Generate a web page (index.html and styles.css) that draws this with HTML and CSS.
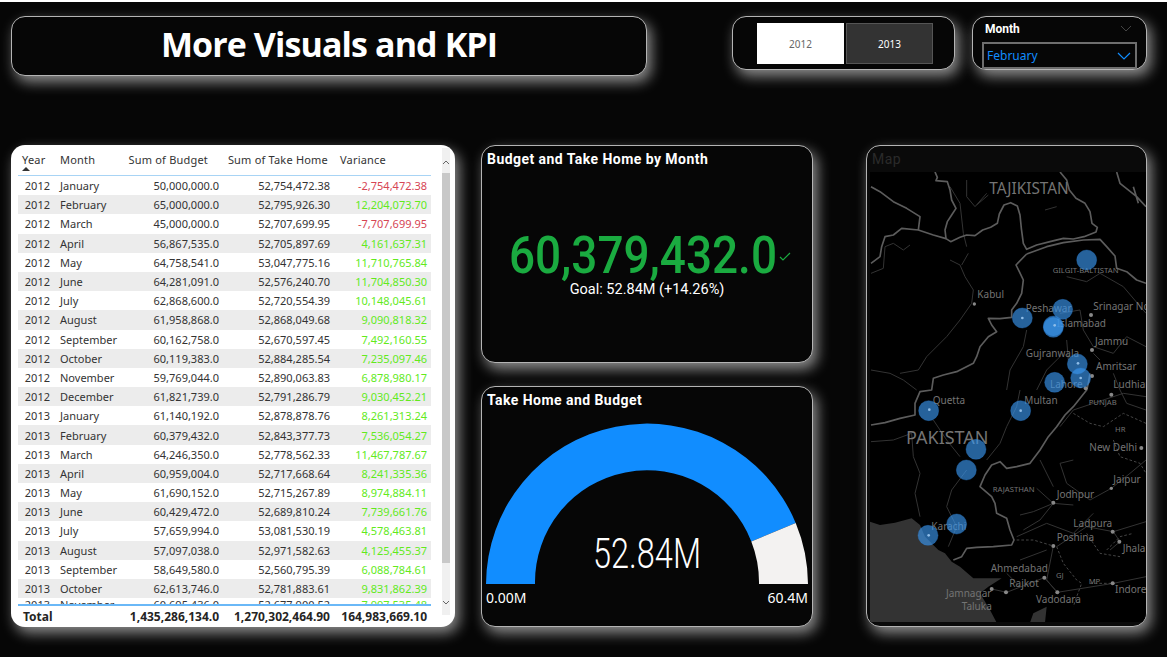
FILE: index.html
```html
<!DOCTYPE html>
<html lang="en">
<head>
<meta charset="UTF-8">
<meta name="viewport" content="width=device-width, initial-scale=1.0">
<title>More Visuals and KPI</title>
<link rel="stylesheet" href="styles.css">
</head>
<body>
<div class="page">
  <header class="top-row">
    <div class="card title-card"><h1>More Visuals and KPI</h1></div>
    <div class="card year-card">
      <div class="year-btn year-on">2012</div>
      <div class="year-btn year-off">2013</div>
    </div>
    <div class="card month-card">
      <div class="month-head">
        <span>Month</span>
        <svg class="chev" width="12" height="7" viewBox="0 0 12 7"><path d="M1 1l5 5 5-5" fill="none" stroke="#444" stroke-width="1"/></svg>
      </div>
      <div class="month-select">
        <span>February</span>
        <svg class="chev" width="14" height="8" viewBox="0 0 14 8"><path d="M1 1l6 6 6-6" fill="none" stroke="#118dff" stroke-width="1.2"/></svg>
      </div>
    </div>
  </header>

  <main class="dash">
    <section class="table-card">
      <div class="table-main">
        <div class="table-head">
          <div class="th-year">Year<i class="sort"></i></div>
          <div class="th-month">Month</div>
          <div class="num head-budget">Sum of Budget</div>
          <div class="num head-take">Sum of Take Home</div>
          <div class="th-var">Variance</div>
        </div>
        <div class="table-body">
          <div class="row"><span class="c-y">2012</span><span class="c-m">January</span><span class="num c-budget">50,000,000.0</span><span class="num c-take">52,754,472.38</span><span class="num c-var neg">-2,754,472.38</span></div>
          <div class="row"><span class="c-y">2012</span><span class="c-m">February</span><span class="num c-budget">65,000,000.0</span><span class="num c-take">52,795,926.30</span><span class="num c-var pos">12,204,073.70</span></div>
          <div class="row"><span class="c-y">2012</span><span class="c-m">March</span><span class="num c-budget">45,000,000.0</span><span class="num c-take">52,707,699.95</span><span class="num c-var neg">-7,707,699.95</span></div>
          <div class="row"><span class="c-y">2012</span><span class="c-m">April</span><span class="num c-budget">56,867,535.0</span><span class="num c-take">52,705,897.69</span><span class="num c-var pos">4,161,637.31</span></div>
          <div class="row"><span class="c-y">2012</span><span class="c-m">May</span><span class="num c-budget">64,758,541.0</span><span class="num c-take">53,047,775.16</span><span class="num c-var pos">11,710,765.84</span></div>
          <div class="row"><span class="c-y">2012</span><span class="c-m">June</span><span class="num c-budget">64,281,091.0</span><span class="num c-take">52,576,240.70</span><span class="num c-var pos">11,704,850.30</span></div>
          <div class="row"><span class="c-y">2012</span><span class="c-m">July</span><span class="num c-budget">62,868,600.0</span><span class="num c-take">52,720,554.39</span><span class="num c-var pos">10,148,045.61</span></div>
          <div class="row"><span class="c-y">2012</span><span class="c-m">August</span><span class="num c-budget">61,958,868.0</span><span class="num c-take">52,868,049.68</span><span class="num c-var pos">9,090,818.32</span></div>
          <div class="row"><span class="c-y">2012</span><span class="c-m">September</span><span class="num c-budget">60,162,758.0</span><span class="num c-take">52,670,597.45</span><span class="num c-var pos">7,492,160.55</span></div>
          <div class="row"><span class="c-y">2012</span><span class="c-m">October</span><span class="num c-budget">60,119,383.0</span><span class="num c-take">52,884,285.54</span><span class="num c-var pos">7,235,097.46</span></div>
          <div class="row"><span class="c-y">2012</span><span class="c-m">November</span><span class="num c-budget">59,769,044.0</span><span class="num c-take">52,890,063.83</span><span class="num c-var pos">6,878,980.17</span></div>
          <div class="row"><span class="c-y">2012</span><span class="c-m">December</span><span class="num c-budget">61,821,739.0</span><span class="num c-take">52,791,286.79</span><span class="num c-var pos">9,030,452.21</span></div>
          <div class="row"><span class="c-y">2013</span><span class="c-m">January</span><span class="num c-budget">61,140,192.0</span><span class="num c-take">52,878,878.76</span><span class="num c-var pos">8,261,313.24</span></div>
          <div class="row"><span class="c-y">2013</span><span class="c-m">February</span><span class="num c-budget">60,379,432.0</span><span class="num c-take">52,843,377.73</span><span class="num c-var pos">7,536,054.27</span></div>
          <div class="row"><span class="c-y">2013</span><span class="c-m">March</span><span class="num c-budget">64,246,350.0</span><span class="num c-take">52,778,562.33</span><span class="num c-var pos">11,467,787.67</span></div>
          <div class="row"><span class="c-y">2013</span><span class="c-m">April</span><span class="num c-budget">60,959,004.0</span><span class="num c-take">52,717,668.64</span><span class="num c-var pos">8,241,335.36</span></div>
          <div class="row"><span class="c-y">2013</span><span class="c-m">May</span><span class="num c-budget">61,690,152.0</span><span class="num c-take">52,715,267.89</span><span class="num c-var pos">8,974,884.11</span></div>
          <div class="row"><span class="c-y">2013</span><span class="c-m">June</span><span class="num c-budget">60,429,472.0</span><span class="num c-take">52,689,810.24</span><span class="num c-var pos">7,739,661.76</span></div>
          <div class="row"><span class="c-y">2013</span><span class="c-m">July</span><span class="num c-budget">57,659,994.0</span><span class="num c-take">53,081,530.19</span><span class="num c-var pos">4,578,463.81</span></div>
          <div class="row"><span class="c-y">2013</span><span class="c-m">August</span><span class="num c-budget">57,097,038.0</span><span class="num c-take">52,971,582.63</span><span class="num c-var pos">4,125,455.37</span></div>
          <div class="row"><span class="c-y">2013</span><span class="c-m">September</span><span class="num c-budget">58,649,580.0</span><span class="num c-take">52,560,795.39</span><span class="num c-var pos">6,088,784.61</span></div>
          <div class="row"><span class="c-y">2013</span><span class="c-m">October</span><span class="num c-budget">62,613,746.0</span><span class="num c-take">52,781,883.61</span><span class="num c-var pos">9,831,862.39</span></div>
          <div class="row row-cut"><span class="c-y">2013</span><span class="c-m">November</span><span class="num c-budget">60,695,436.0</span><span class="num c-take">52,677,900.52</span><span class="num c-var pos">7,997,535.48</span></div>
        </div>
        <div class="table-total">
          <span class="c-total">Total</span>
          <span class="num c-budget">1,435,286,134.0</span>
          <span class="num c-take">1,270,302,464.90</span>
          <span class="num c-var">164,983,669.10</span>
        </div>
      </div>
      <div class="scrollbar">
        <svg class="scroll-arrow" width="8" height="5" viewBox="0 0 8 5"><path d="M1 4l3-3 3 3" fill="none" stroke="#666"/></svg>
        <div class="scroll-thumb"></div>
        <div class="scroll-space"></div>
        <svg class="scroll-arrow" width="8" height="5" viewBox="0 0 8 5"><path d="M1 1l3 3 3-3" fill="none" stroke="#666"/></svg>
      </div>
    </section>

    <div class="mid-col">
      <section class="card kpi-card">
        <h2>Budget and Take Home by Month</h2>
        <div class="kpi-body">
          <div class="kpi-line">
            <span class="kpi-value">60,379,432.0</span>
            <svg class="kpi-check" width="12" height="9" viewBox="0 0 12 9"><path d="M1 5l3 3 7-7" fill="none" stroke="#1aab40" stroke-width="1.2"/></svg>
          </div>
          <div class="kpi-goal">Goal: 52.84M (+14.26%)</div>
        </div>
      </section>

      <section class="card gauge-card">
        <h2>Take Home and Budget</h2>
        <svg class="gauge" width="330" height="210" viewBox="486 417 330 210">
          <path d="M486 584A161 161 0 0 1 795.700 522.900L751.300 541.500A112 112 0 0 0 535 584Z" fill="#118dff"/>
          <path d="M795.700 522.900A161 161 0 0 1 808 584H759A112 112 0 0 0 751.300 541.500Z" fill="#f3f2f1"/>
          <text class="gauge-value" x="647" y="568" text-anchor="middle" textLength="108" lengthAdjust="spacingAndGlyphs">52.84M</text>
          <text class="gauge-label" x="486" y="603">0.00M</text>
          <text class="gauge-label" x="808" y="603" text-anchor="end">60.4M</text>
        </svg>
      </section>
    </div>

    <section class="card map-card">
      <h2>Map</h2>
      <svg class="map" width="276" height="450" viewBox="30 96 828 1350">
        <rect x="30" y="96" width="828" height="1350" fill="#000"/>
        <!-- sea -->
        <path class="sea" d="M30 1145L60 1155 105 1148 155 1135 180 1155 195 1190 235 1230 255 1240 275 1265 300 1280 340 1315 400 1315 425 1315 385 1340 360 1360 390 1410 410 1448 510 1448 520 1420 560 1400 555 1448H30Z"/>
        <!-- minor roads and rivers -->
        <g class="thin">
          <path d="M320 120L320 170 345 200 380 160M270 140L300 190 310 280 320 320M350 195L385 165M555 210L590 200"/>
          <path d="M270 360L300 375 315 410 340 450 335 490 300 540 260 590 200 650 175 690 120 700M325 340L305 375"/>
          <path d="M33 400L70 385 75 320 100 310 130 330 150 315M33 690L90 700 130 720 170 750"/>
          <path d="M620 410L680 425 720 400 790 440 858 520M600 520L660 510 670 570 700 620 760 640 800 590 858 620M620 600L625 660M500 570L490 620 450 690 440 750M600 650L560 690 530 750M700 640L720 660M760 700L780 750 800 790 858 810"/>
          <path d="M480 750L470 800 440 860 420 910 380 960M33 905L100 900 155 880 160 950 180 1000 165 1060 180 1130M220 840L260 900 300 950M320 990L275 1050 260 1100 290 1160 265 1220M600 860L640 810 700 790 790 760 858 770"/>
          <path d="M640 960L600 970 620 1030 690 1080 754 1045 810 1000 858 960M530 1045L580 1090 640 1095M480 1125L520 1115 580 1090 540 1140 490 1170M540 960L580 1040M470 1190L560 1150 640 1180 700 1120M580 1218L560 1320 592 1357 760 1330 858 1310M590 1220L680 1160 760 1175 858 1145M760 1175L780 1205 750 1230M553 1313L440 1357 395 1347M592 1357L553 1313M480 1260L560 1230M440 1300L480 1340"/>
        </g>
        <!-- state lines -->
        <g class="dashed">
          <path d="M640 820L690 850 730 860 790 820 858 850M760 900L780 950 840 970 858 1000M740 1230L780 1190 820 1180M590 1220L610 1270 650 1320 665 1330 650 1370 640 1400M470 1200L520 1200 580 1218M690 1330L760 1330M680 1180L720 1240 780 1250"/>
        </g>
        <!-- country borders -->
        <g class="thick">
          <path d="M225 96L232 112 228 122 262 125 270 150 275 180 288 205 275 225 262 245 255 270 258 296 272 305 300 292 320 285 345 287 368 270 392 262 412 250 418 222 432 195 452 188 472 198 480 225 484 265 490 310 500 328 530 315 570 305 610 295 640 297 672 290 708 276 712 262 696 250 690 215 675 190 648 175 628 150 620 120 600 96"/>
          <path d="M33 140L60 155 100 185 140 205 180 230 175 270 125 265 100 285 75 290 65 320 60 350 33 370M175 270L220 285 258 296"/>
          <path d="M500 342L468 375 478 395 490 420 485 460 470 490 455 510 455 532 420 536 385 535 395 555 410 575 385 590 360 620 350 650 340 670 290 695 250 705 220 715 215 750 180 755 165 790 165 825 120 835 75 848 33 855"/>
          <path d="M500 342L560 320 610 308 670 300 720 298 740 320 765 348 770 385 800 395 830 420 858 430"/>
          <path d="M690 700L685 730 680 750 640 800 615 825 590 860 565 890 540 930 510 970 470 980 440 985 420 965 395 975 375 1005 360 1040 395 1070 405 1090 410 1120 440 1135 450 1170 462 1200 455 1215 400 1220 350 1222 320 1225 305 1250 280 1260"/>
          <path d="M770 96L780 130 830 170 858 200M820 140L835 190"/>
        </g>
        <!-- city dots -->
        <g class="dots">
          <circle cx="343" cy="492" r="5"/><circle cx="693" cy="525" r="6"/><circle cx="696" cy="630" r="6"/><circle cx="696" cy="708" r="6"/><circle cx="677" cy="745" r="6"/>
          <circle cx="754" cy="1045" r="5"/><circle cx="580" cy="1088" r="6"/><circle cx="758" cy="1175" r="6"/><circle cx="580" cy="1218" r="6"/><circle cx="778" cy="1205" r="6"/>
          <circle cx="553" cy="1313" r="6"/><circle cx="438" cy="1357" r="6"/><circle cx="395" cy="1347" r="6"/><circle cx="592" cy="1357" r="6"/><circle cx="758" cy="1330" r="6"/><circle cx="754" cy="764" r="6"/><circle cx="844" cy="924" r="6"/>
        </g>
        <!-- place names -->
        <g class="places">
          <text class="big" x="388" y="161">TAJIKISTAN</text>
          <text class="tiny" x="578" y="400">GILGIT-BALTISTAN</text>
          <text x="352" y="474">Kabul</text>
          <text x="497" y="515">Peshawar</text>
          <text x="700" y="509">Srinagar Nc</text>
          <text x="590" y="561">Islamabad</text>
          <text x="705" y="615">Jammu</text>
          <text x="497" y="651">Gujranwala</text>
          <text x="708" y="690">Amritsar</text>
          <text x="570" y="745">Lahore</text>
          <text x="760" y="745">Ludhiana</text>
          <text x="218" y="793">Quetta</text>
          <text x="493" y="793">Multan</text>
          <text class="tiny" x="686" y="795">PUNJAB</text>
          <text class="tiny" x="765" y="877">HR</text>
          <text class="huge" x="138" y="913">PAKISTAN</text>
          <text x="688" y="933">New Delhi</text>
          <text x="760" y="1028">Jaipur</text>
          <text class="tiny" x="398" y="1055">RAJASTHAN</text>
          <text x="590" y="1073">Jodhpur</text>
          <text x="640" y="1160">Ladpura</text>
          <text x="214" y="1170">Karachi</text>
          <text x="590" y="1203">Poshina</text>
          <text x="788" y="1235">Jhala</text>
          <text x="392" y="1295">Ahmedabad</text>
          <text class="tiny" x="588" y="1315">GJ</text>
          <text class="tiny" x="686" y="1333">MP</text>
          <text x="448" y="1340">Rajkot</text>
          <text x="765" y="1360">Indore</text>
          <text x="258" y="1372">Jamnagar</text>
          <text x="305" y="1409">Taluka</text>
          <text x="528" y="1390">Vadodara</text>
        </g>
        <!-- bubbles -->
        <g class="bubbles">
          <circle cx="680" cy="360" r="30"/><circle cx="608" cy="508" r="30"/><circle cx="487" cy="534" r="30"/>
          <circle cx="580" cy="558" r="30"/><circle cx="580" cy="562" r="30"/>
          <circle cx="652" cy="672" r="30"/><circle cx="662" cy="714" r="30"/><circle cx="584" cy="727" r="30"/>
          <circle cx="206" cy="812" r="30"/><circle cx="482" cy="812" r="30"/><circle cx="348" cy="928" r="30"/>
          <circle cx="319" cy="990" r="30"/><circle cx="290" cy="1152" r="30"/><circle cx="204" cy="1186" r="30"/>
        </g>
        <g class="bubble-dots">
          <circle cx="487" cy="534" r="4"/><circle cx="584" cy="556" r="4"/><circle cx="654" cy="670" r="4"/><circle cx="662" cy="714" r="4"/>
          <circle cx="208" cy="809" r="4"/><circle cx="482" cy="812" r="4"/><circle cx="206" cy="1186" r="4"/>
        </g>
      </svg>
    </section>
  </main>
</div>
</body>
</html>
```

FILE: styles.css
```css
html, body {
  margin: 0;
  padding: 0;
  height: 100%;
  overflow: hidden;
}
body {
  background-color: #fff;
  font-family: "Noto Sans", sans-serif;
}
.page {
  width: 1167px;
  height: 655px;
  margin-top: 2px;
  padding: 14px 0 0 11px;
  box-sizing: border-box;
  background-color: #060606;
}

/* shared panel look */
.card {
  background-color: #060606;
  border: 1px solid #b4b4b4;
  border-radius: 14px;
  box-shadow: 4px 6px 14px rgba(255, 255, 255, 0.55);
  box-sizing: border-box;
}
h2 {
  margin: 0;
  color: #fff;
  font-family: Roboto, sans-serif;
  font-size: 14px;
  font-weight: 700;
  letter-spacing: 0.45px;
}

/* top row */
.top-row {
  display: flex;
  align-items: flex-start;
  height: 60px;
}
.title-card {
  width: 636px;
  height: 60px;
  padding-bottom: 4px;
  display: flex;
  align-items: center;
  justify-content: center;
}
h1 {
  margin: 0;
  color: #fff;
  font-family: "Open Sans", sans-serif;
  font-size: 34px;
  font-weight: 700;
  letter-spacing: -0.9px;
}
.year-card {
  width: 223px;
  height: 54px;
  margin-left: 85px;
  padding: 6px 0 0 24px;
  display: flex;
  gap: 2px;
}
.year-btn {
  width: 87px;
  height: 41px;
  box-sizing: border-box;
  display: flex;
  align-items: center;
  justify-content: center;
  font-size: 10px;
}
.year-on {
  background-color: #fff;
  color: #666;
}
.year-off {
  background-color: #333;
  border: 1px solid #555;
  color: #fff;
}
.month-card {
  width: 175px;
  height: 54px;
  margin-left: 17px;
  padding: 3px 9px 0 9px;
}
.month-head {
  display: flex;
  align-items: center;
  justify-content: space-between;
  height: 17px;
  padding: 0 5px 0 3px;
  color: #fff;
  font-family: Roboto, sans-serif;
  font-size: 12px;
  font-weight: 700;
}
.month-select {
  height: 27px;
  margin-top: 5px;
  box-sizing: border-box;
  border: 2px solid #6e6e6e;
  padding: 0 4px 0 3px;
  display: flex;
  align-items: center;
  justify-content: space-between;
  color: #118dff;
  font-size: 12px;
}

/* main row */
.dash {
  display: flex;
  align-items: flex-start;
  margin-top: 69px;
}

/* table */
.table-card {
  width: 444px;
  height: 482px;
  background-color: #fff;
  border-radius: 14px;
  box-shadow: 4px 6px 14px rgba(255, 255, 255, 0.55);
  display: flex;
  padding: 0 5px 0 7px;
  box-sizing: border-box;
  font-size: 11px;
  color: #333;
}
.table-main {
  width: 414px;
  display: flex;
  flex-direction: column;
}
.table-head {
  height: 31px;
  flex: none;
  box-sizing: border-box;
  border-bottom: 1px solid #a8d4f5;
  position: relative;
  letter-spacing: 0.2px;
}
.table-head > div {
  position: absolute;
  top: 6px;
  line-height: 17px;
}
.th-year { left: 4px; }
.th-month { left: 42px; }
.head-budget { right: 223px; }
.head-take { right: 103px; }
.th-var { left: 322px; }
.sort {
  display: block;
  width: 0;
  height: 0;
  margin: -1px 0 0 0;
  border-left: 4px solid transparent;
  border-right: 4px solid transparent;
  border-bottom: 4px solid #333;
}
.table-body {
  flex: 1;
  min-height: 0;
  overflow: hidden;
}
.row, .table-total {
  display: flex;
  align-items: center;
}
.row {
  height: 19.2px;
  line-height: 19px;
}
.row:nth-child(even) {
  background-color: #ececec;
}
/* last row is scrolled half out of view, text sits a bit higher */
.row-cut {
  align-items: flex-start;
  line-height: 14px;
}
.num {
  text-align: right;
  white-space: nowrap;
}
.c-y { width: 32px; text-align: right; }
.c-m { width: 68px; padding-left: 10px; box-sizing: border-box; white-space: nowrap; }
.c-budget { width: 101px; }
.c-take { width: 111px; }
.c-var { width: 97px; }
.neg { color: #d64554; }
.pos { color: #62ea1c; }
.table-total {
  height: 21px;
  flex: none;
  border-top: 2px solid #6ab8f7;
  font-size: 12px;
  font-weight: 700;
  color: #252423;
}
.c-total { width: 100px; padding-left: 5px; box-sizing: border-box; }
.scrollbar {
  width: 8px;
  margin: 3px 0 0 11px;
  height: 467px;
  background-color: #f0f0f0;
  display: flex;
  flex-direction: column;
  align-items: center;
}
.scroll-arrow { flex: none; margin: 12px 0 8px; }
.scroll-arrow:last-child { margin: 0 0 10px; }
.scroll-thumb {
  width: 8px;
  height: 390px;
  background-color: #c8c8c8;
}
.scroll-space { flex: 1; }

/* middle column */
.mid-col {
  width: 332px;
  margin-left: 26px;
  display: flex;
  flex-direction: column;
  gap: 23px;
}
.kpi-card {
  height: 218px;
  padding: 5px 5px 0;
  display: flex;
  flex-direction: column;
}
.kpi-body {
  flex: 1;
  display: flex;
  flex-direction: column;
  align-items: center;
  padding-top: 64px;
}
.kpi-line {
  display: flex;
  align-items: center;
  gap: 1px;
  margin-left: 4px;
}
.kpi-value {
  display: inline-block;
  margin: 0 -13px;
  color: #1aab40;
  font-family: Roboto, sans-serif;
  font-size: 51px;
  font-weight: 500;
  line-height: 50px;
  transform: scaleX(0.9);
}
.kpi-goal {
  color: #fff;
  font-family: Roboto, sans-serif;
  font-size: 14.5px;
}
.gauge-card {
  height: 241px;
  padding: 5px 5px 0;
  position: relative;
}
.gauge {
  position: absolute;
  left: 4px;
  top: 30px;
}
.gauge-value {
  fill: #fff;
  font-family: Roboto, sans-serif;
  font-size: 42px;
  font-weight: 300;
}
.gauge-label {
  fill: #fff;
  font-family: "Noto Sans", sans-serif;
  font-size: 14px;
}

/* map */
.map-card {
  width: 281px;
  height: 482px;
  margin-left: 53px;
  background-color: #0a0a0a;
  padding: 5px 0 0 3px;
  overflow: hidden;
}
.map-card h2 {
  height: 21px;
  padding-left: 2px;
  color: #2a2a2a;
  font-weight: 400;
  letter-spacing: 0.5px;
}
.map {
  display: block;
}
.sea { fill: #333; }
.thin path, .dashed path, .thick path {
  fill: none;
  stroke-linejoin: round;
}
.thin path { stroke: #333; stroke-width: 3; }
.dashed path { stroke: #444; stroke-width: 3; stroke-dasharray: 8 6; }
.thick path { stroke: #5c5c5c; stroke-width: 5; }
.dots circle { fill: #888; }
.places text {
  fill: #747474;
  font-family: "Noto Sans", sans-serif;
  font-size: 30px;
}
.places .big { font-size: 46px; }
.places .huge { font-size: 54px; }
.places .tiny { font-size: 23px; }
.bubbles circle {
  fill: #3a96ee;
  fill-opacity: 0.65;
  stroke: #2a7fd4;
  stroke-opacity: 0.5;
  stroke-width: 2;
}
.bubble-dots circle {
  fill: #8fbde8;
}
```
